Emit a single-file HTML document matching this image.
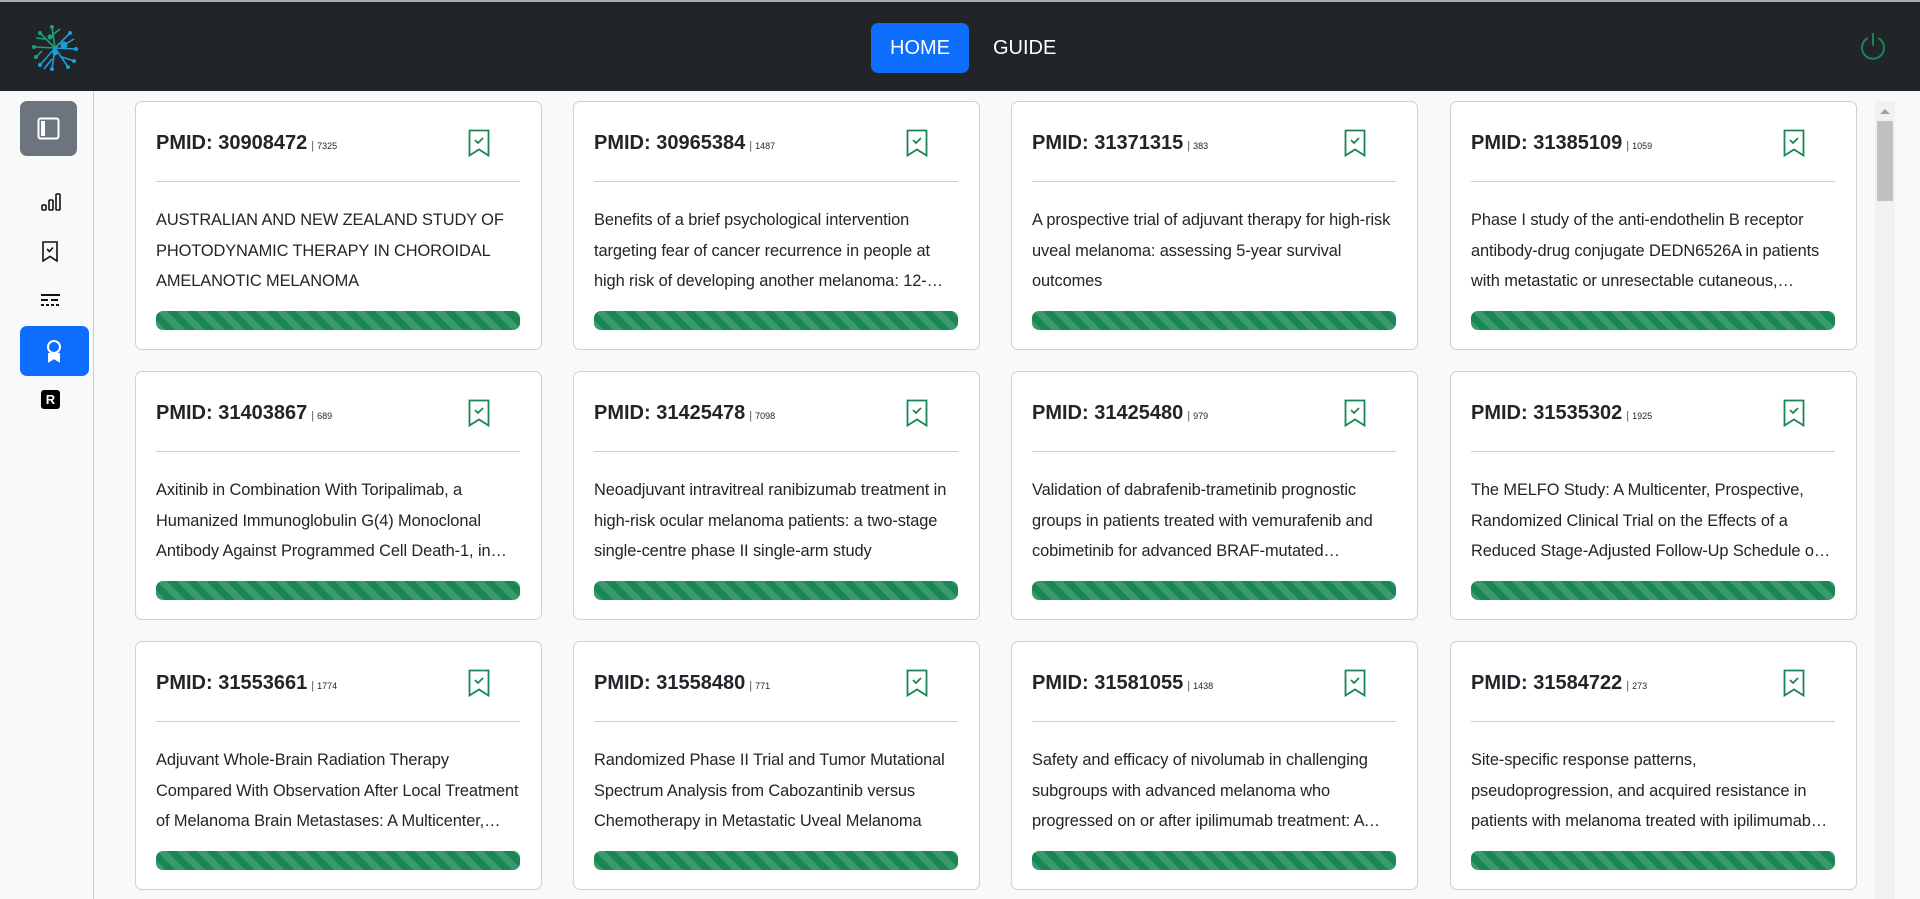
<!DOCTYPE html>
<html><head><meta charset="utf-8"><style>
*{box-sizing:border-box;margin:0;padding:0}
body{width:1920px;height:899px;overflow:hidden;background:#f8f9fa;font-family:"Liberation Sans",sans-serif;position:relative}
.hdr{position:absolute;left:0;top:0;width:1920px;height:91px;background:#212529;border-top:2px solid #aaa}
.home{position:absolute;left:871px;top:21px;width:98px;height:50px;background:#0d6efd;border-radius:7px;color:#fff;font-size:20px;line-height:50px;text-align:center}
.guide{position:absolute;left:993px;top:21px;height:50px;color:#fff;font-size:20px;line-height:50px}
.side{position:absolute;left:0;top:91px;width:94px;height:808px;border-right:1px solid #ccc;background:#f8f9fa}
.sb{position:absolute;left:20px;top:10px;width:57px;height:55px;background:#6c757d;border-radius:7px}
.act{position:absolute;left:20px;top:235px;width:69px;height:50px;background:#0d6efd;border-radius:7px}
.card{position:absolute;width:407px;height:249px;background:#fff;border:1px solid #d0d0d0;border-radius:7px}
.t{position:absolute;left:20px;top:30px;font-size:20px;font-weight:bold;color:#212529}
.t small{font-size:9px;font-weight:normal;margin-left:4px}
.t small b{font-weight:normal;color:#555;margin-right:3px;font-size:11px}
.bm{position:absolute;left:332px;top:27px}
.sep{position:absolute;left:20px;right:21px;top:79px;border-top:1.5px solid #ccc}
.tx{position:absolute;left:20px;right:21px;top:103px;font-size:16.4px;letter-spacing:-0.1px;line-height:30.5px;color:#212529;display:-webkit-box;-webkit-line-clamp:3;-webkit-box-orient:vertical;overflow:hidden}
.pb{position:absolute;left:20px;right:21px;top:209px;height:19px;border-radius:7px;background:#198754 repeating-linear-gradient(45deg,rgba(255,255,255,.15) 0 7px,transparent 7px 14px)}
.scr{position:absolute;left:1875px;top:101px;width:20px;height:798px;background:#f1f1f1}
.thumb{position:absolute;left:2px;top:20px;width:16px;height:80px;background:#c1c1c1}
</style></head><body>
<div class="hdr">
<svg style="position:absolute;left:30px;top:21px" width="50" height="50" viewBox="0 0 50 50" fill="none" stroke-width="1.6">
<g stroke="#1aa37a"><line x1="25" y1="25" x2="10" y2="10"/><line x1="25" y1="25" x2="22" y2="4"/><line x1="25" y1="25" x2="4" y2="24"/><line x1="15" y1="16" x2="6" y2="15"/><line x1="20" y1="14" x2="30" y2="6"/><line x1="12" y1="28" x2="6" y2="34"/></g>
<g stroke="#1b9fd8"><line x1="25" y1="25" x2="40" y2="10"/><line x1="25" y1="25" x2="46" y2="26"/><line x1="25" y1="25" x2="38" y2="44"/><line x1="25" y1="25" x2="22" y2="46"/><line x1="25" y1="25" x2="10" y2="42"/><line x1="34" y1="22" x2="44" y2="16"/><line x1="32" y1="34" x2="44" y2="38"/><line x1="22" y1="36" x2="14" y2="46"/></g>
<g fill="#1aa37a"><circle cx="10" cy="10" r="2"/><circle cx="22" cy="4" r="2"/><circle cx="4" cy="24" r="2"/><circle cx="20" cy="14" r="2.5"/><circle cx="6" cy="34" r="2"/></g>
<g fill="#1b9fd8"><circle cx="40" cy="10" r="2"/><circle cx="46" cy="26" r="2"/><circle cx="38" cy="44" r="2"/><circle cx="22" cy="46" r="2"/><circle cx="10" cy="42" r="2"/><circle cx="34" cy="22" r="3.5"/><circle cx="25" cy="30" r="2.5"/><circle cx="44" cy="38" r="2"/></g>
</svg>
<div class="home">HOME</div><div class="guide">GUIDE</div>
<svg style="position:absolute;left:1859px;top:30px" width="28" height="30" viewBox="0 0 28 30" fill="none" stroke="#198754" stroke-width="2" stroke-linecap="round"><line x1="14" y1="2" x2="14" y2="13"/><path d="M8 6.5A11 11 0 1 0 20 6.5"/></svg>
</div>
<div class="side">
<div class="sb"><svg style="position:absolute;left:17px;top:16px" width="23" height="23" viewBox="0 0 23 23" fill="none" stroke="#fff" stroke-width="2"><rect x="1.5" y="1.5" width="20" height="20" rx="2"/><rect x="4" y="4" width="4" height="15" fill="#fff" stroke="none"/></svg></div>
<svg style="position:absolute;left:41px;top:101px" width="20" height="20" viewBox="0 0 20 20" fill="none" stroke="#111" stroke-width="1.6"><rect x="1" y="13" width="4" height="5" rx="1"/><rect x="8" y="8" width="4" height="10" rx="1"/><rect x="15" y="2" width="4" height="16" rx="1"/></svg>
<svg style="position:absolute;left:42px;top:150px" width="16" height="21" viewBox="0 0 16 21" fill="none" stroke="#111" stroke-width="1.6"><path d="M1 1h14v19l-7-4.5L1 20z"/><path d="M5 8l2.5 2.5L11 6.5"/></svg>
<svg style="position:absolute;left:41px;top:203px" width="19" height="12" viewBox="0 0 19 12" stroke="#111" stroke-width="2"><line x1="0" y1="1" x2="19" y2="1"/><line x1="0" y1="6" x2="19" y2="6" stroke-dasharray="7 3"/><line x1="0" y1="11" x2="19" y2="11" stroke-dasharray="3 2"/></svg>
<div class="act"><svg style="position:absolute;left:25px;top:13px" width="18" height="24" viewBox="0 0 18 24" fill="none" stroke="#fff" stroke-width="2"><circle cx="9" cy="8" r="6"/><path d="M4 14v8l5-3 5 3v-8" fill="#fff"/></svg></div>
<div style="position:absolute;left:41px;top:299px;width:19px;height:19px;background:#000;border-radius:3px;color:#fff;font-size:13px;font-weight:bold;text-align:center;line-height:19px">R</div>
</div>
<div class="scr"><div style="position:absolute;left:5px;top:8px;border:5px solid transparent;border-bottom:5px solid #a0a0a0;border-top:0"></div><div class="thumb"></div></div>
<div class="card" style="left:135px;top:101px"><div class="t">PMID: 30908472<small><b>|</b>7325</small></div><svg class="bm" width="22" height="28" viewBox="0 0 22 28" fill="none" stroke="#198754" stroke-width="1.8"><path d="M1.5 1.5h19v25l-9.5-6-9.5 6z"/><path d="M7 11l3 3 5-5"/></svg><div class="sep"></div><div class="tx">AUSTRALIAN AND NEW ZEALAND STUDY OF PHOTODYNAMIC THERAPY IN CHOROIDAL AMELANOTIC MELANOMA</div><div class="pb"></div></div>
<div class="card" style="left:573px;top:101px"><div class="t">PMID: 30965384<small><b>|</b>1487</small></div><svg class="bm" width="22" height="28" viewBox="0 0 22 28" fill="none" stroke="#198754" stroke-width="1.8"><path d="M1.5 1.5h19v25l-9.5-6-9.5 6z"/><path d="M7 11l3 3 5-5"/></svg><div class="sep"></div><div class="tx">Benefits of a brief psychological intervention targeting fear of cancer recurrence in people at high risk of developing another melanoma: 12-month follow-up</div><div class="pb"></div></div>
<div class="card" style="left:1011px;top:101px"><div class="t">PMID: 31371315<small><b>|</b>383</small></div><svg class="bm" width="22" height="28" viewBox="0 0 22 28" fill="none" stroke="#198754" stroke-width="1.8"><path d="M1.5 1.5h19v25l-9.5-6-9.5 6z"/><path d="M7 11l3 3 5-5"/></svg><div class="sep"></div><div class="tx">A prospective trial of adjuvant therapy for high-risk uveal melanoma: assessing 5-year survival outcomes</div><div class="pb"></div></div>
<div class="card" style="left:1450px;top:101px"><div class="t">PMID: 31385109<small><b>|</b>1059</small></div><svg class="bm" width="22" height="28" viewBox="0 0 22 28" fill="none" stroke="#198754" stroke-width="1.8"><path d="M1.5 1.5h19v25l-9.5-6-9.5 6z"/><path d="M7 11l3 3 5-5"/></svg><div class="sep"></div><div class="tx">Phase I study of the anti-endothelin B receptor antibody-drug conjugate DEDN6526A in patients with metastatic or unresectable cutaneous, mucosal, or uveal melanoma</div><div class="pb"></div></div>
<div class="card" style="left:135px;top:371px"><div class="t">PMID: 31403867<small><b>|</b>689</small></div><svg class="bm" width="22" height="28" viewBox="0 0 22 28" fill="none" stroke="#198754" stroke-width="1.8"><path d="M1.5 1.5h19v25l-9.5-6-9.5 6z"/><path d="M7 11l3 3 5-5"/></svg><div class="sep"></div><div class="tx">Axitinib in Combination With Toripalimab, a Humanized Immunoglobulin G(4) Monoclonal Antibody Against Programmed Cell Death-1, in Patients With Metastatic Mucosal Melanoma</div><div class="pb"></div></div>
<div class="card" style="left:573px;top:371px"><div class="t">PMID: 31425478<small><b>|</b>7098</small></div><svg class="bm" width="22" height="28" viewBox="0 0 22 28" fill="none" stroke="#198754" stroke-width="1.8"><path d="M1.5 1.5h19v25l-9.5-6-9.5 6z"/><path d="M7 11l3 3 5-5"/></svg><div class="sep"></div><div class="tx">Neoadjuvant intravitreal ranibizumab treatment in high-risk ocular melanoma patients: a two-stage single-centre phase II single-arm study</div><div class="pb"></div></div>
<div class="card" style="left:1011px;top:371px"><div class="t">PMID: 31425480<small><b>|</b>979</small></div><svg class="bm" width="22" height="28" viewBox="0 0 22 28" fill="none" stroke="#198754" stroke-width="1.8"><path d="M1.5 1.5h19v25l-9.5-6-9.5 6z"/><path d="M7 11l3 3 5-5"/></svg><div class="sep"></div><div class="tx">Validation of dabrafenib-trametinib prognostic groups in patients treated with vemurafenib and cobimetinib for advanced BRAF-mutated melanoma</div><div class="pb"></div></div>
<div class="card" style="left:1450px;top:371px"><div class="t">PMID: 31535302<small><b>|</b>1925</small></div><svg class="bm" width="22" height="28" viewBox="0 0 22 28" fill="none" stroke="#198754" stroke-width="1.8"><path d="M1.5 1.5h19v25l-9.5-6-9.5 6z"/><path d="M7 11l3 3 5-5"/></svg><div class="sep"></div><div class="tx">The MELFO Study: A Multicenter, Prospective, Randomized Clinical Trial on the Effects of a Reduced Stage-Adjusted Follow-Up Schedule on Cutaneous Melanoma</div><div class="pb"></div></div>
<div class="card" style="left:135px;top:641px"><div class="t">PMID: 31553661<small><b>|</b>1774</small></div><svg class="bm" width="22" height="28" viewBox="0 0 22 28" fill="none" stroke="#198754" stroke-width="1.8"><path d="M1.5 1.5h19v25l-9.5-6-9.5 6z"/><path d="M7 11l3 3 5-5"/></svg><div class="sep"></div><div class="tx">Adjuvant Whole-Brain Radiation Therapy Compared With Observation After Local Treatment of Melanoma Brain Metastases: A Multicenter, Randomized Phase III Trial</div><div class="pb"></div></div>
<div class="card" style="left:573px;top:641px"><div class="t">PMID: 31558480<small><b>|</b>771</small></div><svg class="bm" width="22" height="28" viewBox="0 0 22 28" fill="none" stroke="#198754" stroke-width="1.8"><path d="M1.5 1.5h19v25l-9.5-6-9.5 6z"/><path d="M7 11l3 3 5-5"/></svg><div class="sep"></div><div class="tx">Randomized Phase II Trial and Tumor Mutational Spectrum Analysis from Cabozantinib versus Chemotherapy in Metastatic Uveal Melanoma</div><div class="pb"></div></div>
<div class="card" style="left:1011px;top:641px"><div class="t">PMID: 31581055<small><b>|</b>1438</small></div><svg class="bm" width="22" height="28" viewBox="0 0 22 28" fill="none" stroke="#198754" stroke-width="1.8"><path d="M1.5 1.5h19v25l-9.5-6-9.5 6z"/><path d="M7 11l3 3 5-5"/></svg><div class="sep"></div><div class="tx">Safety and efficacy of nivolumab in challenging subgroups with advanced melanoma who progressed on or after ipilimumab treatment: A single-arm, open-label, phase II study</div><div class="pb"></div></div>
<div class="card" style="left:1450px;top:641px"><div class="t">PMID: 31584722<small><b>|</b>273</small></div><svg class="bm" width="22" height="28" viewBox="0 0 22 28" fill="none" stroke="#198754" stroke-width="1.8"><path d="M1.5 1.5h19v25l-9.5-6-9.5 6z"/><path d="M7 11l3 3 5-5"/></svg><div class="sep"></div><div class="tx">Site-specific response patterns, pseudoprogression, and acquired resistance in patients with melanoma treated with ipilimumab combined with anti-PD-1 therapy</div><div class="pb"></div></div>
</body></html>
